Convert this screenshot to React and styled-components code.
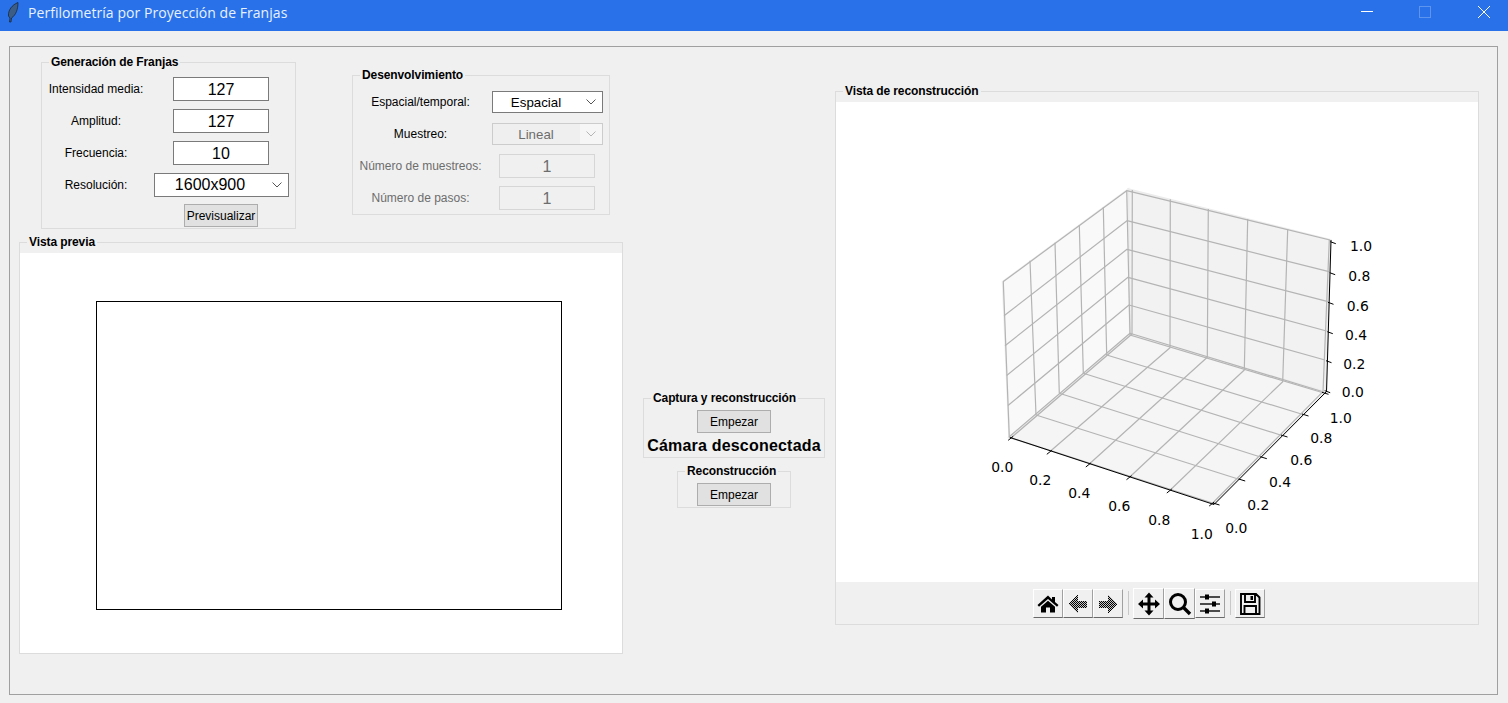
import React from "react";
import styled, { createGlobalStyle } from "styled-components";

const GlobalStyle = createGlobalStyle`
  html, body {
    margin: 0;
    background: #f0f0f0;
    overflow: hidden;
    font-family: "Liberation Sans", Arial, sans-serif;
  }
`;

const TitleBar = styled.header`
  display: flex;
  align-items: center;
  height: 31px;
  background: #2871e9;
  color: #e9f1fd;
  font-family: "Open Sans", "Noto Sans", sans-serif;
  font-size: 14px;
`;

const TitleIcon = styled.svg`
  width: 16px;
  height: 22px;
  margin: 0 6px 5px 6px;
  flex: none;
`;

const TitleText = styled.span`
  flex: 1;
  margin-bottom: 6px;
  letter-spacing: 0.05px;
`;

const WindowButton = styled.svg`
  width: 58px;
  height: 12px;
  margin-bottom: 7px;
  flex: none;
`;

const MainFrame = styled.main`
  display: flex;
  align-items: flex-start;
  height: 639px;
  margin: 15px 10px 0 9px;
  padding: 8px 0 0 9px;
  border: 1px solid #a0a0a0;
  box-sizing: content-box;
  width: 1478px;
`;

const LeftColumn = styled.div`
  width: 604px;
  flex: none;
  margin-right: 20px;
`;

const TopRow = styled.div`
  display: flex;
  align-items: flex-start;
  padding-left: 22px;
  gap: 56px;
  margin-bottom: 6px;
`;

const Group = styled.fieldset`
  margin: ${(p) => p.$margin || "0"};
  padding: 0;
  width: ${(p) => p.$width}px;
  box-sizing: border-box;
  border: 1px solid #dcdcdc;
  min-inline-size: 0;
`;

const Legend = styled.legend`
  margin-left: 7px;
  padding: 0 2px;
  font-size: 12px;
  line-height: 14px;
  font-weight: 700;
  letter-spacing: -0.1px;
  color: #000;
`;

const FormGrid = styled.div`
  display: grid;
  grid-template-columns: ${(p) => p.$label}px ${(p) => p.$control}px;
  grid-template-rows: repeat(4, 32px);
  grid-auto-rows: auto;
  align-items: center;
  justify-items: center;
  padding: 4px 0 0 0;
`;

const FieldLabel = styled.label`
  font-size: 12px;
  color: ${(p) => (p.$disabled ? "#6d6d6d" : "#000")};
`;

const ValueInput = styled.input`
  width: 96px;
  height: 24px;
  box-sizing: border-box;
  padding: 1px 0 0;
  border: 1px solid ${(p) => (p.disabled ? "#d6d6d6" : "#7a7a7a")};
  background: ${(p) => (p.disabled ? "#f0f0f0" : "#fff")};
  color: ${(p) => (p.disabled ? "#6d6d6d" : "#000")};
  font: 16px "Liberation Sans", Arial, sans-serif;
  text-align: center;
  outline: none;
`;

const Select = styled.div`
  display: flex;
  align-items: center;
  width: ${(p) => p.$width}px;
  height: ${(p) => p.$height}px;
  box-sizing: border-box;
  border: 1px solid ${(p) => (p.$disabled ? "#cccccc" : "#7a7a7a")};
  background: ${(p) => (p.$disabled ? "#efefef" : "#fff")};
  color: ${(p) => (p.$disabled ? "#6d6d6d" : "#000")};
  font-size: ${(p) => p.$font}px;
`;

const SelectValue = styled.span`
  flex: 1;
  text-align: center;
`;

const SelectArrow = styled.span`
  display: flex;
  align-items: center;
  justify-content: center;
  align-self: stretch;
  width: 22px;
  background: ${(p) => (p.$disabled ? "#f6f6f6" : "transparent")};
`;

const Chevron = styled.svg`
  width: 10px;
  height: 6px;
`;

const PushButton = styled.button`
  display: block;
  width: 74px;
  height: 23px;
  padding: 0;
  box-sizing: border-box;
  border: 1px solid #adadad;
  background: #e1e1e1;
  color: #000;
  font: 12px "Liberation Sans", Arial, sans-serif;
  margin: ${(p) => p.$margin || "0"};
`;

const PreviewCanvas = styled.div`
  height: 400px;
  box-sizing: border-box;
  margin-top: 4px;
  padding: 48px 0 0 76px;
  background: #fff;
`;

const PreviewRect = styled.div`
  width: 466px;
  height: 309px;
  box-sizing: border-box;
  border: 1px solid #000;
`;

const MiddleColumn = styled.div`
  display: flex;
  flex-direction: column;
  align-items: center;
  width: 182px;
  flex: none;
  margin: 336px 10px 0 0;
`;

const CameraStatus = styled.div`
  margin: 3px 0 1px;
  height: 20px;
  line-height: 20px;
  font-size: 16px;
  font-weight: 700;
  letter-spacing: 0.2px;
  text-align: center;
`;

const RightColumn = styled.div`
  width: 644px;
  flex: none;
  margin-top: 29px;
`;

const PlotPanel = styled.div`
  margin-top: 4px;
  height: 480px;
  background: #fff;
`;

const PlotSvg = styled.svg`
  display: block;
  width: 642px;
  height: 480px;
`;

const TickText = styled.text`
  font-family: "DejaVu Sans", sans-serif;
  font-size: 13.9px;
  fill: #000;
  text-anchor: middle;
  dominant-baseline: central;
`;

const Toolbar = styled.div`
  display: flex;
  align-items: center;
  justify-content: flex-start;
  height: 42px;
  padding-left: 197px;
`;

const ToolButton = styled.button`
  display: flex;
  align-items: center;
  justify-content: center;
  width: ${(p) => (p.$wide ? 31 : 30)}px;
  height: ${(p) => (p.$wide ? 31 : 29)}px;
  padding: 0;
  box-sizing: border-box;
  background: #f0f0f0;
  border: 1px solid;
  border-color: #ffffff #a0a0a0 #696969 #ffffff;
`;

const ToolSeparator = styled.span`
  width: 1px;
  height: 24px;
  margin: 0 4px 0 5px;
  background: #c8c8c8;
`;

const ToolIcon = styled.svg`
  width: 24px;
  height: 24px;
  margin-top: 2px;
`;

// tick positions read off the reference, in page coordinates
const xFront = [[1010.7, 438.3], [1049.3, 452.3], [1088.3, 465], [1129, 477.7], [1169.3, 491], [1211.7, 504]];
const xBack = [[1132, 334], [1170, 347.7], [1207.3, 357.3], [1244.3, 370], [1282.7, 381.7], [1323, 391.7]];
const xTop = [[1132.3, 190], [1170.3, 199.3], [1208.3, 209], [1247.7, 219], [1287.7, 229.3], [1329.3, 240]];
const yFront = [[1216, 504], [1241.7, 480], [1263.3, 457.7], [1284, 436], [1305, 415], [1325, 393.3]];
const yBack = [[1009.3, 437.3], [1036, 415], [1059.3, 393.3], [1083.3, 373.3], [1106.7, 355], [1130, 335]];
const yTop = [[1003.3, 281.7], [1030, 260.7], [1055, 242.7], [1079.3, 225], [1103.3, 207.3], [1126.7, 190.7]];
const zLeft = [[1009, 437], [1008, 405.5], [1006.7, 375.5], [1005, 345.7], [1004, 315.7], [1003, 281.7]];
const zBack = [[1130, 333.3], [1129, 305], [1128, 277.3], [1127, 249.3], [1127, 220.7], [1126.7, 190.7]];
const zRight = [[1323, 391.7], [1325, 360], [1326.5, 331], [1328, 301.7], [1329, 271.7], [1330, 240]];
const zTicks = [[1326.7, 391.7], [1328, 361.7], [1329.3, 332.7], [1330, 303.3], [1331.7, 273.7], [1332.3, 242.7]];

const tickNames = ["0.0", "0.2", "0.4", "0.6", "0.8", "1.0"];
const xLabels = [[1002.3, 467.3], [1040.3, 480.3], [1079.3, 493.3], [1119.3, 506.3], [1159.3, 520.3], [1201.7, 534.3]];
const yLabels = [[1236.3, 528.3], [1258.3, 505], [1280, 482.3], [1301.3, 460], [1321.3, 438], [1340.7, 418.3]];
const zLabels = [[1352.7, 392.3], [1354.3, 364], [1356, 335], [1357.7, 306], [1359.3, 276], [1361, 246]];

const line = (...pts) => pts.map((p) => p.join(",")).join(" ");

const Plot3D = () => (
  <PlotSvg viewBox="836 102 642 480">
    <polygon points="1002.7,281.7 1128.3,189.3 1130,335 1009.3,437.3" fill="#f9f9f9" stroke="#f0f0f0" strokeWidth="2" />
    <polygon points="1128.3,189.3 1330.7,240 1326,392 1130,335" fill="#f2f2f2" stroke="#ececec" strokeWidth="2" />
    <polygon points="1130,335 1326,392 1214.3,504 1009.3,437.3" fill="#f5f5f5" stroke="#eeeeee" strokeWidth="2" />

    <g fill="none" stroke="#b4b4b4" strokeWidth="1.2" strokeLinejoin="round">
      {xFront.map((p, i) => (
        <polyline key={i} points={line(xTop[i], xBack[i], [p[0] + 1, p[1] - 1])} />
      ))}
      {yFront.map((p, i) => (
        <polyline key={i} points={line(yTop[i], yBack[i], [p[0] - 2, p[1] - 0.5])} />
      ))}
      {zLeft.map((p, i) => (
        <polyline key={i} points={line(p, zBack[i], zRight[i])} />
      ))}
    </g>

    <g fill="none" stroke="#000" strokeWidth="1">
      <line x1="1010" y1="437.5" x2="1214" y2="504.5" />
      <line x1="1214" y1="504.5" x2="1326" y2="392" />
      <line x1="1326.5" y1="392" x2="1331" y2="240" />
      {xFront.map((p, i) => (
        <line key={i} x1={p[0] - 2.5} y1={p[1] + 2} x2={p[0] + 2.5} y2={p[1] - 2} />
      ))}
      {yFront.map((p, i) => (
        <line key={i} x1={p[0] - 3} y1={p[1] - 1} x2={p[0] + 3.5} y2={p[1] + 1} />
      ))}
      {zTicks.map((p, i) => (
        <line key={i} x1={p[0] - 2} y1={p[1] - 1} x2={p[0] + 3.5} y2={p[1] + 1} />
      ))}
    </g>

    {tickNames.map((name, i) => (
      <React.Fragment key={name}>
        <TickText x={xLabels[i][0]} y={xLabels[i][1]}>{name}</TickText>
        <TickText x={yLabels[i][0]} y={yLabels[i][1]}>{name}</TickText>
        <TickText x={zLabels[i][0]} y={zLabels[i][1]}>{name}</TickText>
      </React.Fragment>
    ))}
  </PlotSvg>
);

const SelectChevron = ({ disabled }) => (
  <Chevron viewBox="0 0 10 6">
    <polyline points="0.5,0.5 5,5 9.5,0.5" fill="none" stroke={disabled ? "#b5b5b5" : "#555"} />
  </Chevron>
);

const Combo = ({ value, width, height, font, disabled }) => (
  <Select $width={width} $height={height} $font={font} $disabled={disabled}>
    <SelectValue>{value}</SelectValue>
    <SelectArrow $disabled={disabled}>
      <SelectChevron disabled={disabled} />
    </SelectArrow>
  </Select>
);

const HomeIcon = () => (
  <ToolIcon viewBox="0 0 24 24">
    <path d="M12 3.5 L1.5 13 L3 14.8 L12 7 L21 14.8 L22.5 13 L19 10 V5 H16 V7.5 Z" />
    <path d="M5 14.8 L12 8.8 L19 14.8 V20.5 H14 V15.5 H10 V20.5 H5 Z" />
  </ToolIcon>
);

const DitherArrow = ({ id, d }) => (
  <ToolIcon viewBox="0 0 24 24" shapeRendering="crispEdges">
    <defs>
      <pattern id={id} width="2" height="2" patternUnits="userSpaceOnUse">
        <rect width="2" height="2" fill="#c4c4c4" />
        <rect width="1" height="1" fill="#000" />
        <rect x="1" y="1" width="1" height="1" fill="#000" />
      </pattern>
    </defs>
    <path d={d} fill={`url(#${id})`} />
  </ToolIcon>
);

const MoveIcon = () => (
  <ToolIcon viewBox="0 0 24 24">
    <path d="M12 0.5 L16.5 5.5 H13.5 V10.5 H18 V7.5 L23 12 L18 16.5 V13.5 H13.5 V18.5 H16.5 L12 23.5 L7.5 18.5 H10.5 V13.5 H6 V16.5 L1 12 L6 7.5 V10.5 H10.5 V5.5 H7.5 Z" />
  </ToolIcon>
);

const SearchIcon = () => (
  <ToolIcon viewBox="0 0 24 24">
    <circle cx="10" cy="10" r="7.5" fill="none" stroke="#000" strokeWidth="3" />
    <line x1="15.5" y1="15.5" x2="22" y2="22" stroke="#000" strokeWidth="3.4" />
  </ToolIcon>
);

const SlidersIcon = () => (
  <ToolIcon viewBox="0 0 24 24">
    <g stroke="#222" strokeWidth="1.6">
      <line x1="2" y1="5" x2="22" y2="5" />
      <line x1="2" y1="12" x2="22" y2="12" />
      <line x1="2" y1="19" x2="22" y2="19" />
    </g>
    <rect x="7" y="2.5" width="4" height="5" />
    <rect x="14" y="9.5" width="4" height="5" />
    <rect x="7" y="16.5" width="4" height="5" />
  </ToolIcon>
);

const SaveIcon = () => (
  <ToolIcon viewBox="0 0 24 24">
    <path d="M3 2 H18 L21.5 5.5 V22 H3 Z M7 2 V10 H17 V2 M6.5 22 V14 H18 V22" fill="none" stroke="#000" strokeWidth="1.9" />
    <rect x="12.5" y="4" width="2.5" height="4" />
  </ToolIcon>
);

export default function App() {
  return (
    <>
      <GlobalStyle />
      <TitleBar>
        <TitleIcon viewBox="0 0 16 22">
          <path
            d="M12 0.5 C6 3 2 8 2.5 14 L4 16 L3.5 20 L5 20 L5.5 16 C10 13 12 7 12 0.5 Z"
            fill="#3c5e86"
            stroke="#14202f"
            strokeWidth="0.7"
          />
        </TitleIcon>
        <TitleText>Perfilometría por Proyección de Franjas</TitleText>
        <WindowButton viewBox="0 0 58 12">
          <line x1="27" y1="5.5" x2="39" y2="5.5" stroke="#fff" />
        </WindowButton>
        <WindowButton viewBox="0 0 58 12">
          <rect x="27.5" y="0.5" width="11" height="11" fill="none" stroke="#5c94ee" />
        </WindowButton>
        <WindowButton viewBox="0 0 58 12">
          <path d="M28 0 L40 12 M40 0 L28 12" stroke="#fff" />
        </WindowButton>
      </TitleBar>

      <MainFrame>
        <LeftColumn>
          <TopRow>
            <Group $width={255}>
              <Legend>Generación de Franjas</Legend>
              <FormGrid $label={108} $control={142}>
                <FieldLabel>Intensidad media:</FieldLabel>
                <ValueInput readOnly value="127" />
                <FieldLabel>Amplitud:</FieldLabel>
                <ValueInput readOnly value="127" />
                <FieldLabel>Frecuencia:</FieldLabel>
                <ValueInput readOnly value="10" />
                <FieldLabel>Resolución:</FieldLabel>
                <Combo value="1600x900" width={135} height={24} font={16} />
                <span />
                <PushButton $margin="3px 0 1px">Previsualizar</PushButton>
              </FormGrid>
            </Group>
            <Group $width={258} $margin="13px 0 0 0">
              <Legend>Desenvolvimiento</Legend>
              <FormGrid $label={135} $control={118}>
                <FieldLabel>Espacial/temporal:</FieldLabel>
                <Combo value="Espacial" width={111} height={22} font={13.3} />
                <FieldLabel>Muestreo:</FieldLabel>
                <Combo value="Lineal" width={111} height={22} font={13.3} disabled />
                <FieldLabel $disabled>Número de muestreos:</FieldLabel>
                <ValueInput disabled value="1" />
                <FieldLabel $disabled>Número de pasos:</FieldLabel>
                <ValueInput disabled value="1" />
              </FormGrid>
            </Group>
          </TopRow>
          <Group $width={604}>
            <Legend>Vista previa</Legend>
            <PreviewCanvas>
              <PreviewRect />
            </PreviewCanvas>
          </Group>
        </LeftColumn>

        <MiddleColumn>
          <Group $width={182}>
            <Legend>Captura y reconstrucción</Legend>
            <PushButton $margin="5px auto 0">Empezar</PushButton>
            <CameraStatus>Cámara desconectada</CameraStatus>
          </Group>
          <Group $width={114} $margin="6px 0 0 0">
            <Legend>Reconstrucción</Legend>
            <PushButton $margin="5px auto 1px">Empezar</PushButton>
          </Group>
        </MiddleColumn>

        <RightColumn>
          <Group $width={644}>
            <Legend>Vista de reconstrucción</Legend>
            <PlotPanel>
              <Plot3D />
            </PlotPanel>
            <Toolbar>
              <ToolButton><HomeIcon /></ToolButton>
              <ToolButton>
                <DitherArrow id="dither-back" d="M3 12 L12 2 V8.5 H21 V15.5 H12 V22 Z" />
              </ToolButton>
              <ToolButton>
                <DitherArrow id="dither-forward" d="M21 12 L12 2 V8.5 H3 V15.5 H12 V22 Z" />
              </ToolButton>
              <ToolSeparator />
              <ToolButton $wide><MoveIcon /></ToolButton>
              <ToolButton $wide><SearchIcon /></ToolButton>
              <ToolButton><SlidersIcon /></ToolButton>
              <ToolSeparator />
              <ToolButton><SaveIcon /></ToolButton>
            </Toolbar>
          </Group>
        </RightColumn>
      </MainFrame>
    </>
  );
}
